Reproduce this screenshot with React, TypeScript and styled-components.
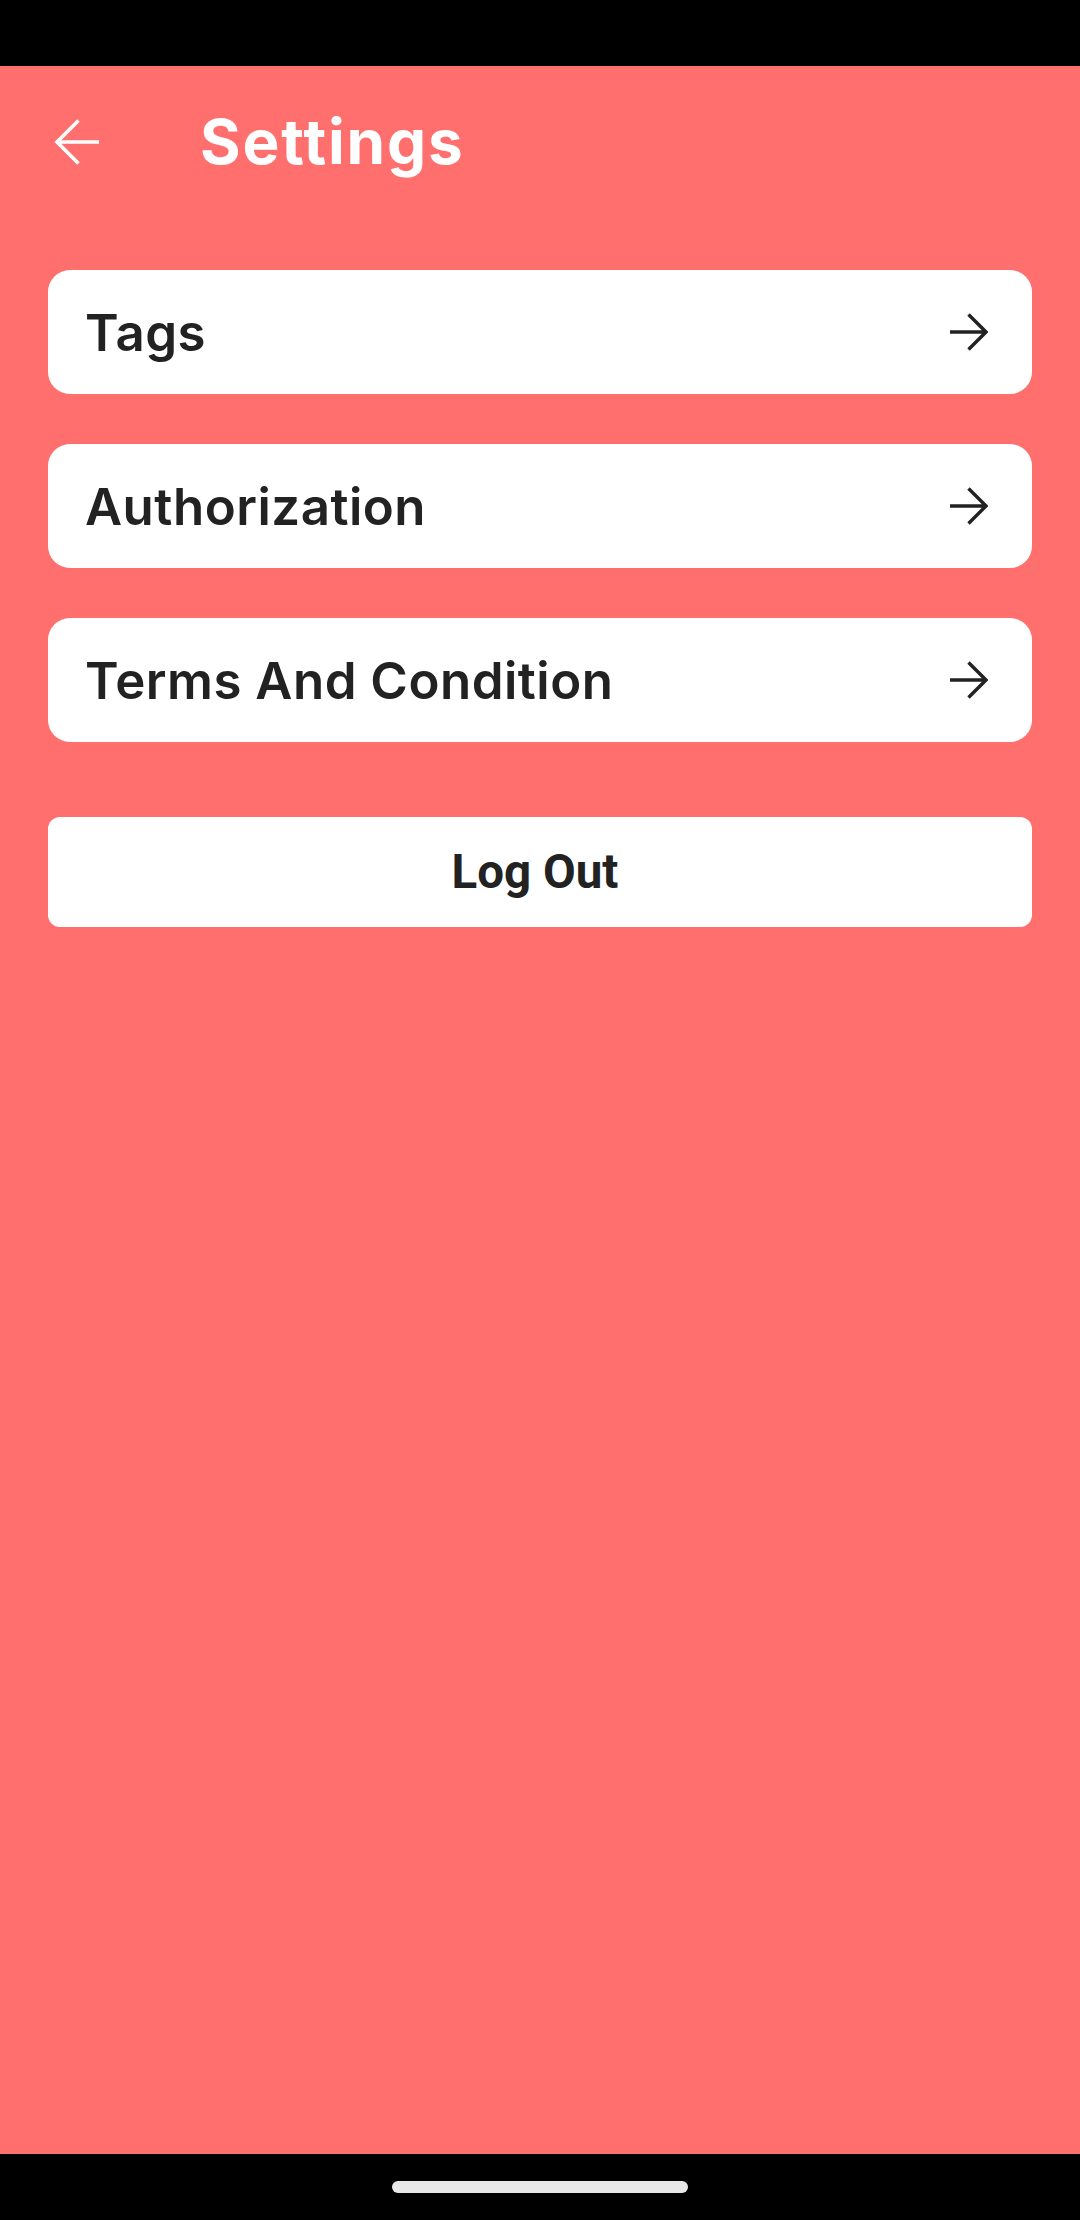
import React from "react";
import styled, { createGlobalStyle } from "styled-components";

const Global = createGlobalStyle`
  html, body { margin: 0; padding: 0; background: #000; overflow: hidden; }
  * { box-sizing: border-box; }
`;

const Screen = styled.div`
  width: 1080px;
  height: 2220px;
  display: flex;
  flex-direction: column;
  background: #000;
`;

const StatusBar = styled.div`
  height: 66px;
  background: #000;
  flex-shrink: 0;
`;

const Body = styled.main`
  flex: 1;
  background: #ff6f6e;
  display: flex;
  flex-direction: column;
  padding: 0 48px;
`;

const Header = styled.header`
  height: 154px;
  display: flex;
  align-items: center;
  padding-bottom: 2px;
`;

const BackButton = styled.button`
  width: 152px;
  height: 60px;
  padding: 0 0 0 6px;
  border: none;
  background: transparent;
  display: flex;
  align-items: center;
  cursor: pointer;
`;

const Title = styled.h1`
  margin: 0;
  color: #fff;
  font-family: Inter, "Open Sans", sans-serif;
  font-weight: 700;
  font-size: 62px;
  letter-spacing: 1.8px;
  line-height: 1;
`;

const List = styled.div`
  margin-top: 50px;
  display: flex;
  flex-direction: column;
  gap: 50px;
`;

const Card = styled.button`
  height: 124px;
  border: none;
  border-radius: 22px;
  background: #fff;
  display: flex;
  align-items: center;
  justify-content: space-between;
  padding: 0 44px 0 37px;
  cursor: pointer;
  text-align: left;
`;

const CardLabel = styled.span`
  font-family: Inter, "Open Sans", sans-serif;
  font-weight: 600;
  font-size: 51px;
  color: #222;
  letter-spacing: 0.5px;
`;

const LogOut = styled.button`
  margin-top: 75px;
  height: 110px;
  border: none;
  border-radius: 12px;
  background: #fff;
  font-family: Roboto, sans-serif;
  font-weight: 700;
  font-size: 47.5px;
  color: #222;
  cursor: pointer;
  padding-right: 16px;
`;

const NavBar = styled.div`
  height: 66px;
  background: #000;
  flex-shrink: 0;
  display: flex;
  justify-content: center;
  padding-top: 27px;
`;

const HomePill = styled.div`
  width: 296px;
  height: 12px;
  border-radius: 6px;
  background: #e8e8e8;
`;

const BackArrow = () => (
  <svg width="46" height="46" viewBox="0 0 46 46" fill="none">
    <path d="M45 23H3M24.5 1.5L3 23l21.5 21.5" stroke="#fff" strokeWidth="3.6" />
  </svg>
);

const ForwardArrow = () => (
  <svg width="38" height="38" viewBox="0 0 38 38" fill="none">
    <path d="M0 19H35.5M18.5 1.5L36 19 18.5 36.5" stroke="#222" strokeWidth="3.4" />
  </svg>
);

const items = ["Tags", "Authorization", "Terms And Condition"];

export default function App() {
  return (
    <Screen>
      <Global />
      <StatusBar />
      <Body>
        <Header>
          <BackButton aria-label="Back">
            <BackArrow />
          </BackButton>
          <Title>Settings</Title>
        </Header>
        <List>
          {items.map((label) => (
            <Card key={label}>
              <CardLabel>{label}</CardLabel>
              <ForwardArrow />
            </Card>
          ))}
        </List>
        <LogOut>Log Out</LogOut>
      </Body>
      <NavBar>
        <HomePill />
      </NavBar>
    </Screen>
  );
}
